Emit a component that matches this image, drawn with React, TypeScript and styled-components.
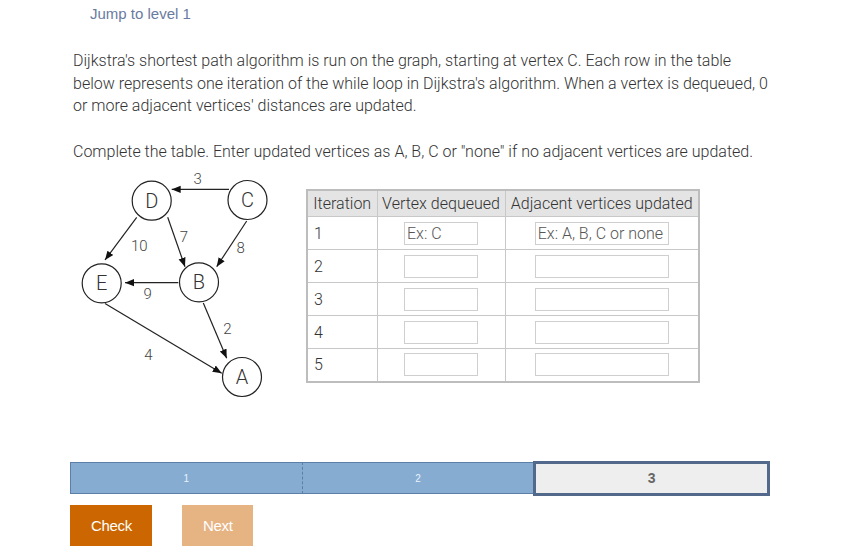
import React from 'react';
import styled, { createGlobalStyle } from 'styled-components';

const GlobalStyle = createGlobalStyle`
  body {
    margin: 0;
    background: #ffffff;
    font-family: Roboto, "Liberation Sans", sans-serif;
  }
`;

const Page = styled.div`
  width: 850px;
  height: 558px;
  padding: 4px 0 0 70px;
  box-sizing: border-box;
`;

const JumpLink = styled.div`
  margin-left: 20px;
  font-family: "Liberation Sans", Arial, sans-serif;
  font-size: 15px;
  line-height: 20px;
  color: #6a7ba0;
`;

const Prompt = styled.p`
  margin: 26px 0 0 3px;
  width: 700px;
  font-weight: 300;
  font-size: 16px;
  line-height: 22.5px;
  color: #333333;
`;

const Instruction = styled(Prompt)`
  margin-top: 23.5px;
`;

const Work = styled.div`
  display: flex;
  align-items: flex-start;
  margin-top: 1px;
`;

const Graph = styled.svg`
  display: block;
  width: 232px;
  height: 236px;
  margin-left: 4px;
  flex-shrink: 0;
`;

const Table = styled.table`
  margin-top: 24px;
  border-collapse: collapse;
  table-layout: fixed;
  width: 392px;
  border: 2px solid #bdbdbd;
  font-weight: 300;
  font-size: 16px;
  color: #333333;
`;

const HeadCell = styled.th`
  height: 27px;
  padding: 0 3px;
  box-sizing: border-box;
  background: #e4e4e4;
  border: 1px solid #c8c8c8;
  font-weight: 300;
  text-align: center;
  white-space: nowrap;
`;

const Cell = styled.td<{ $left?: boolean }>`
  height: 33px;
  padding: 0 6px;
  box-sizing: border-box;
  border: 1px solid #c8c8c8;
  text-align: ${(p) => (p.$left ? 'left' : 'center')};
  vertical-align: middle;
`;

const Field = styled.input<{ $w: number }>`
  width: ${(p) => p.$w}px;
  height: 23px;
  box-sizing: border-box;
  border: 1px solid #cfcfcf;
  padding: 0 2px;
  font-family: Roboto, "Liberation Sans", sans-serif;
  font-weight: 300;
  font-size: 16px;
  color: #333333;
  outline: none;
  &::placeholder {
    color: #555555;
  }
`;

const Levels = styled.div`
  display: flex;
  width: 700px;
  height: 35px;
  margin-top: 60px;
  align-items: center;
`;

const Level = styled.div<{ $current?: boolean; $dashed?: boolean }>`
  flex: 1;
  height: ${(p) => (p.$current ? '35px' : '32px')};
  box-sizing: border-box;
  display: flex;
  align-items: center;
  justify-content: center;
  font-family: "Liberation Sans", Arial, sans-serif;
  font-size: ${(p) => (p.$current ? '14px' : '10px')};
  font-weight: ${(p) => (p.$current ? 700 : 400)};
  color: ${(p) => (p.$current ? '#666666' : '#e8f2fa')};
  background: ${(p) => (p.$current ? '#eeeeee' : '#87acd2')};
  border: ${(p) => (p.$current ? '3px solid #53698c' : '1px solid #5b7fa6')};
  border-left: ${(p) =>
    p.$current ? '3px solid #53698c' : p.$dashed ? '1px dashed #5b7fa6' : '1px solid #5b7fa6'};
  border-right: ${(p) => (p.$current ? '3px solid #53698c' : 'none')};
`;

const Buttons = styled.div`
  display: flex;
  gap: 30px;
  margin-top: 9px;
`;

const Button = styled.button<{ $dim?: boolean }>`
  height: 41px;
  padding: 0 20px 0 21px;
  border: none;
  border-radius: 0;
  background: ${(p) => (p.$dim ? '#e6b383' : '#cc6600')};
  color: #ffffff;
  font-family: "Liberation Sans", Arial, sans-serif;
  font-size: 15px;
  letter-spacing: -0.3px;
  cursor: pointer;
`;

const nodes = [
  { id: 'D', x: 77.7, y: 35.7 },
  { id: 'C', x: 173.5, y: 35 },
  { id: 'E', x: 27.7, y: 118.3 },
  { id: 'B', x: 125, y: 117.3 },
  { id: 'A', x: 168, y: 212 },
];

// arrows as drawn in the figure: start point -> tip
const edges = [
  { k: 'CD', x1: 155, y1: 24.3, x2: 97.7, y2: 24.3 },
  { k: 'DE', x1: 62.7, y1: 52.3, x2: 31, y2: 95 },
  { k: 'DB', x1: 93.7, y1: 52.3, x2: 111, y2: 101.7 },
  { k: 'CB', x1: 172.7, y1: 56, x2: 142.7, y2: 101.7 },
  { k: 'BE', x1: 104.3, y1: 117.7, x2: 51, y2: 117.7 },
  { k: 'BA', x1: 129.3, y1: 138, x2: 152.7, y2: 193.3 },
  { k: 'EA', x1: 31, y1: 138.5, x2: 147.7, y2: 208.3 },
];

const weights = [
  { t: '3', x: 123.7, y: 13.3 },
  { t: '10', x: 65.3, y: 80 },
  { t: '7', x: 110, y: 71 },
  { t: '8', x: 166.7, y: 82.3 },
  { t: '9', x: 73.7, y: 128.3 },
  { t: '2', x: 153.3, y: 163.3 },
  { t: '4', x: 74.3, y: 189.3 },
];

const R = 19.5;

function GraphDrawing(): JSX.Element {
  return (
    <Graph viewBox="0 0 232 236">
      <defs>
        <marker id="arrow" viewBox="0 0 10 10" refX="10" refY="5" markerWidth="9" markerHeight="9" orient="auto" markerUnits="userSpaceOnUse">
          <path d="M0,1 L10,5 L0,9 z" fill="#111" />
        </marker>
      </defs>
      {nodes.map((n) => (
        <g key={n.id}>
          <circle cx={n.x} cy={n.y} r={R} fill="#fff" stroke="#222" strokeWidth={1.2} />
          <text x={n.x} y={n.y + 7} textAnchor="middle" fontFamily="Roboto, sans-serif" fontWeight={300} fontSize={20} fill="#333">
            {n.id}
          </text>
        </g>
      ))}
      {edges.map((e) => (
        <line key={e.k} x1={e.x1} y1={e.y1} x2={e.x2} y2={e.y2} stroke="#222" strokeWidth={1.2} markerEnd="url(#arrow)" />
      ))}
      {weights.map((w) => (
        <text key={w.t} x={w.x} y={w.y + 5.5} textAnchor="middle" fontFamily="Roboto, sans-serif" fontWeight={300} fontSize={15} fill="#444">
          {w.t}
        </text>
      ))}
    </Graph>
  );
}

const rows = [1, 2, 3, 4, 5];

export default function App(): JSX.Element {
  return (
    <Page>
      <GlobalStyle />
      <JumpLink>Jump to level 1</JumpLink>
      <Prompt>
        Dijkstra's shortest path algorithm is run on the graph, starting at vertex C. Each row in the table below
        represents one iteration of the while loop in Dijkstra's algorithm. When a vertex is dequeued, 0 or more
        adjacent vertices' distances are updated.
      </Prompt>
      <Instruction>
        Complete the table. Enter updated vertices as A, B, C or "none" if no adjacent vertices are updated.
      </Instruction>
      <Work>
        <GraphDrawing />
        <Table>
          <colgroup>
            <col style={{ width: 70 }} />
            <col style={{ width: 128 }} />
            <col style={{ width: 194 }} />
          </colgroup>
          <thead>
            <tr>
              <HeadCell>Iteration</HeadCell>
              <HeadCell>Vertex dequeued</HeadCell>
              <HeadCell>Adjacent vertices updated</HeadCell>
            </tr>
          </thead>
          <tbody>
            {rows.map((r) => (
              <tr key={r}>
                <Cell $left>{r}</Cell>
                <Cell>
                  <Field $w={74} placeholder={r === 1 ? 'Ex: C' : ''} />
                </Cell>
                <Cell>
                  <Field $w={134} placeholder={r === 1 ? 'Ex: A, B, C or none' : ''} />
                </Cell>
              </tr>
            ))}
          </tbody>
        </Table>
      </Work>
      <Levels>
        <Level>1</Level>
        <Level $dashed>2</Level>
        <Level $current>3</Level>
      </Levels>
      <Buttons>
        <Button>Check</Button>
        <Button $dim>Next</Button>
      </Buttons>
    </Page>
  );
}
